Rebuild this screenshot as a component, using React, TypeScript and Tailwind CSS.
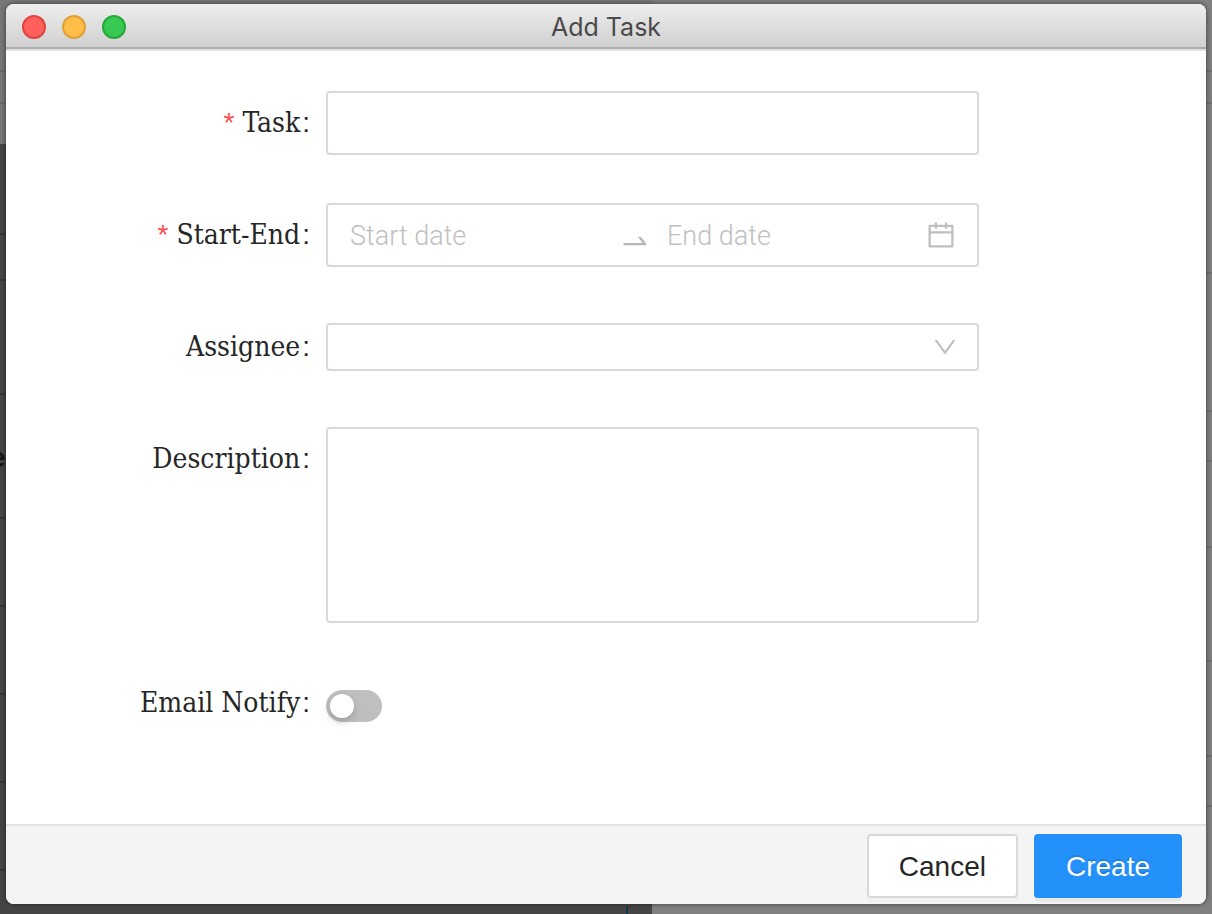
import type { ReactNode } from "react";
import { AiOutlineCalendar, AiOutlineDown, AiOutlineSwapRight } from "react-icons/ai";

const leftLines = [234, 280, 394, 518, 606, 694, 782, 870];
const rightLines = [71, 103, 273, 411, 461, 547, 661, 756, 806];

const fieldBox = "w-full rounded-[4px] border-2 border-[#d9d9d9] bg-white outline-none focus:border-[#40a9ff]";

function Backdrop() {
  return (
    <div aria-hidden="true" className="absolute inset-0 flex overflow-hidden bg-[#808080]">
      <div className="relative w-[652px] bg-[#454545]">
        <div className="h-36 bg-[#777777] pt-[70px]">
          <div className="h-[34px] border-y-2 border-[#686868]" />
        </div>
        {leftLines.map((y) => (
          <div key={y} className="absolute h-0.5 w-full bg-[#363636]" style={{ top: y - 1 }} />
        ))}
        <span className="absolute top-[442px] -left-2.5 font-['Liberation_Sans'] text-[28px] leading-8 font-bold text-[#151515]">
          e
        </span>
        <div className="absolute right-6 bottom-0 h-2 w-0.5 bg-[#123a50]" />
      </div>
      <div className="relative flex-1">
        {rightLines.map((y) => (
          <div key={y} className="absolute h-0.5 w-full bg-[#707070]" style={{ top: y - 1 }} />
        ))}
      </div>
    </div>
  );
}

type RowProps = {
  label: string;
  htmlFor: string;
  required?: boolean;
  children: ReactNode;
};

function Row({ label, htmlFor, required, children }: RowProps) {
  return (
    <div className="grid grid-cols-[320fr_653fr_227fr]">
      <label
        htmlFor={htmlFor}
        className="flex h-16 items-center justify-end pr-4 font-['DejaVu_Serif_Condensed','DejaVu_Serif',serif] text-[28px] whitespace-nowrap text-[#262626]"
      >
        {required && (
          <span className="mr-2 font-['Liberation_Sans',sans-serif] text-[#ff4d4f]">*</span>
        )}
        {label}
        <span className="ml-0.5 font-['Liberation_Sans',sans-serif]">:</span>
      </label>
      <div className="flex min-h-16 min-w-0 items-center">{children}</div>
    </div>
  );
}

export default function App() {
  const dateInput =
    "min-w-0 bg-transparent pt-0.5 font-['Roboto',sans-serif] text-[27px] font-light text-[#262626] outline-none placeholder:text-[#bfbfbf]";

  return (
    <div className="relative flex min-h-screen flex-col px-1.5 pt-1 pb-2.5">
      <Backdrop />
      <form
        onSubmit={(e) => e.preventDefault()}
        className="relative flex flex-1 flex-col overflow-hidden rounded-lg bg-white shadow-[0_0_5px_rgba(0,0,0,0.55)]"
      >
        <header className="grid h-[45px] grid-cols-3 items-center border-b-2 border-[#acacac] bg-linear-to-b from-[#eeeeee] to-[#d0d0d0] px-4">
          <div className="flex gap-4 pt-0.5">
            <button type="button" aria-label="Close" className="size-6 rounded-full border-2 border-[#e0443e] bg-[#ff605c]" />
            <button type="button" aria-label="Minimize" className="size-6 rounded-full border-2 border-[#dea035] bg-[#ffbd4a]" />
            <button type="button" aria-label="Zoom" className="size-6 rounded-full border-2 border-[#24a938] bg-[#38c953]" />
          </div>
          <h1 className="pt-0.5 text-center font-['Inter',sans-serif] text-[25px] leading-8 whitespace-nowrap text-[#4a4a4a]">Add Task</h1>
        </header>

        <main className="flex flex-1 flex-col gap-12 border-t-2 border-[#dde2e6] pt-10 pb-20">
          <Row label="Task" htmlFor="task" required>
            <input id="task" type="text" required className={`${fieldBox} h-16 px-[22px] font-['Liberation_Sans',sans-serif] text-[28px]`} />
          </Row>
          <Row label="Start-End" htmlFor="start" required>
            <div className={`${fieldBox} flex h-16 items-center pr-5 pl-[22px]`}>
              <input id="start" type="text" placeholder="Start date" className={`${dateInput} flex-1`} />
              <AiOutlineSwapRight className="mt-3 size-8 shrink-0 text-[#b8b8b8]" />
              <input id="end" type="text" aria-label="End date" placeholder="End date" className={`${dateInput} ml-4 w-[258px]`} />
              <AiOutlineCalendar className="size-8 shrink-0 text-[#bfbfbf]" />
            </div>
          </Row>
          <Row label="Assignee" htmlFor="assignee">
            <div className="relative w-full">
              <select id="assignee" defaultValue="" className={`${fieldBox} block h-12 appearance-none px-[22px] font-['Liberation_Sans',sans-serif] text-[28px]`}>
                <option value="" />
              </select>
              <AiOutlineDown className="pointer-events-none absolute inset-y-0 right-5 my-auto size-7 text-[#bfbfbf]" />
            </div>
          </Row>
          <Row label="Description" htmlFor="description">
            <textarea id="description" className={`${fieldBox} block h-[196px] resize-none px-[22px] py-2 font-['Liberation_Sans',sans-serif] text-[28px]`} />
          </Row>
          <Row label="Email Notify" htmlFor="notify">
            <input
              id="notify"
              type="checkbox"
              role="switch"
              className="mt-1.5 h-8 w-14 appearance-none rounded-full bg-[#bfbfbf] p-1 before:block before:size-6 before:rounded-full before:bg-white before:shadow-[0_4px_8px_rgba(0,35,11,0.2)] before:transition-transform checked:bg-[#1890ff] checked:before:translate-x-6"
            />
          </Row>
        </main>

        <footer className="flex justify-end gap-4 border-t-2 border-[#dde2e6] bg-[#f4f4f4] pt-2 pr-6 pb-1.5 font-['Liberation_Sans',sans-serif] text-[28px]">
          <button type="button" className="h-16 rounded-[4px] border-2 border-[#d9d9d9] bg-white px-[30px] pt-0.5 text-[#262626] shadow-[0_4px_0_rgba(0,0,0,0.016)]">
            Cancel
          </button>
          <button type="submit" className="h-16 rounded-[4px] border-2 border-[#2490fa] bg-[#2490fa] px-[30px] pt-0.5 text-white shadow-[0_4px_0_rgba(0,0,0,0.045)] text-shadow-[0_-2px_0_rgba(0,0,0,0.12)]">
            Create
          </button>
        </footer>
      </form>
    </div>
  );
}
